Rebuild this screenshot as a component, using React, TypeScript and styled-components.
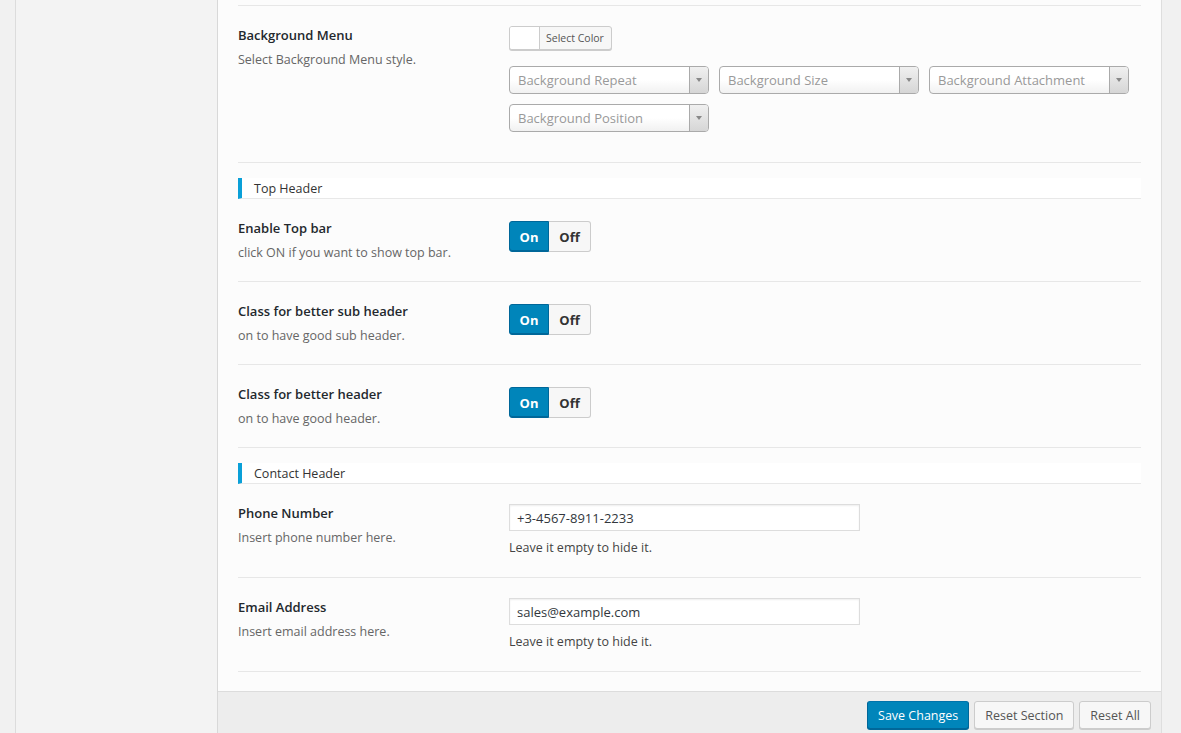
import React from 'react';
import styled, { createGlobalStyle } from 'styled-components';

const GlobalStyle = createGlobalStyle`
    html, body {
        margin: 0;
        padding: 0;
        background: #f1f1f1;
        font-family: "Open Sans", "Noto Sans", sans-serif;
        font-size: 13px;
        color: #444;
        height: 733px;
        overflow: hidden;
    }
    * {
        box-sizing: border-box;
    }
`;

const Page = styled.div`
    display: flex;
    height: 733px;
    padding-left: 15px;
`;

const Sidebar = styled.div`
    width: 203px;
    flex-shrink: 0;
    background: #f3f3f3;
    border-left: 1px solid #dcdcdc;
    border-right: 1px solid #d8d8d8;
`;

const Main = styled.div`
    width: 944px;
    flex-shrink: 0;
    display: flex;
    flex-direction: column;
    background: #fcfcfc;
    border-right: 1px solid #dedede;
`;

const Content = styled.div`
    flex: 1;
    padding: 5px 20px 19px 20px;
`;

const FieldList = styled.div`
    border-top: 1px solid #e7e7e7;
`;

const Field = styled.div<{ $pb?: number }>`
    display: flex;
    padding: 20px 0 ${(p) => p.$pb ?? 19}px 0;
    border-bottom: 1px solid #e7e7e7;
`;

const Label = styled.div`
    width: 271px;
    flex-shrink: 0;
`;

const Title = styled.div`
    font-weight: 600;
    font-size: 13px;
    line-height: 18px;
    color: #23282d;
`;

const Desc = styled.div`
    margin-top: 7px;
    font-size: 12.5px;
    line-height: 18px;
    color: #666;
`;

const Control = styled.div`
    flex: 1;
`;

const SectionHead = styled.div`
    margin-top: 15px;
    height: 21px;
    display: flex;
    align-items: center;
    background: #fff;
    border-left: 4px solid #0aa0d8;
    border-bottom: 1px solid #e8e8e8;
    padding-left: 12px;
    font-size: 12.5px;
    color: #333;
`;

const ColorButton = styled.div`
    display: flex;
    width: fit-content;
    height: 24px;
    border: 1px solid #ccc;
    border-radius: 3px;
    background: #f7f7f7;
    box-shadow: 0 1px 0 #ccc;
    overflow: hidden;
`;

const Swatch = styled.span`
    width: 30px;
    background: #fff;
    border-right: 1px solid #ccc;
`;

const ColorText = styled.span`
    display: flex;
    align-items: center;
    padding: 0 7px 0 6px;
    font-size: 10.5px;
    color: #555;
`;

const SelectGrid = styled.div`
    display: grid;
    grid-template-columns: repeat(3, 200px);
    column-gap: 10px;
    row-gap: 10px;
    margin-top: 16px;
`;

const Select = styled.div`
    height: 28px;
    display: flex;
    border: 1px solid #aaa;
    border-radius: 4px;
    background: linear-gradient(#fff 50%, #f1f1f1);
    overflow: hidden;
`;

const SelectText = styled.span`
    flex: 1;
    display: flex;
    align-items: center;
    padding-left: 8px;
    font-size: 13px;
    color: #999;
    white-space: nowrap;
`;

const SelectArrow = styled.span`
    width: 19px;
    display: flex;
    align-items: center;
    justify-content: center;
    border-left: 1px solid #aaa;
    background: linear-gradient(#f0f0f0, #d6d6d6);
    &::after {
        content: '';
        border-left: 3px solid transparent;
        border-right: 3px solid transparent;
        border-top: 4px solid #888;
    }
`;

const Toggle = styled.div`
    display: flex;
    width: fit-content;
    margin-top: 2px;
    height: 31px;
`;

const ToggleOption = styled.span<{ $active?: boolean }>`
    display: flex;
    align-items: center;
    justify-content: center;
    width: ${(p) => (p.$active ? 40 : 42)}px;
    font-weight: 700;
    font-size: 13px;
    color: ${(p) => (p.$active ? '#fff' : '#333')};
    background: ${(p) => (p.$active ? '#0085ba' : '#f7f7f7')};
    border: 1px solid ${(p) => (p.$active ? '#006799' : '#ccc')};
    border-radius: ${(p) => (p.$active ? '3px 0 0 3px' : '0 3px 3px 0')};
    ${(p) => (p.$active ? '' : 'border-left: none;')}
    box-shadow: ${(p) => (p.$active ? 'inset 0 -1px 0 #006799' : 'none')};
`;

const TextInput = styled.input`
    display: block;
    width: 351px;
    height: 27px;
    padding: 0 7px;
    border: 1px solid #ddd;
    background: #fff;
    box-shadow: inset 0 1px 2px rgba(0, 0, 0, 0.07);
    font-family: inherit;
    font-size: 13px;
    color: #32373c;
    outline: none;
`;

const Help = styled.div`
    margin-top: 8px;
    font-size: 12.5px;
    line-height: 18px;
    color: #444;
`;

const Footer = styled.div`
    height: 42px;
    display: flex;
    justify-content: flex-end;
    align-items: flex-start;
    gap: 5px;
    padding: 9px 10px 0 0;
    background: #ededed;
    border-top: 1px solid #dcdcdc;
`;

const Button = styled.button<{ $primary?: boolean }>`
    height: 28px;
    padding: 0 10px;
    border-radius: 3px;
    border-width: 1px;
    border-style: solid;
    border-color: ${(p) => (p.$primary ? '#0073aa #006799 #006799' : '#ccc')};
    font-family: inherit;
    font-size: 12.5px;
    cursor: pointer;
    color: ${(p) => (p.$primary ? '#fff' : '#555')};
    background: ${(p) => (p.$primary ? '#0085ba' : '#f7f7f7')};
    box-shadow: 0 1px 0 ${(p) => (p.$primary ? '#006799' : '#ccc')};
`;

const toggles = [
    { title: 'Enable Top bar', desc: 'click ON if you want to show top bar.' },
    { title: 'Class for better sub header', desc: 'on to have good sub header.' },
    { title: 'Class for better header', desc: 'on to have good header.' },
];

const contacts = [
    { title: 'Phone Number', desc: 'Insert phone number here.', value: '+3-4567-8911-2233' },
    { title: 'Email Address', desc: 'Insert email address here.', value: 'sales@example.com' },
];

const selects = ['Background Repeat', 'Background Size', 'Background Attachment', 'Background Position'];

const App = () => {
    return (
        <>
            <GlobalStyle />
            <Page>
                <Sidebar />
                <Main>
                    <Content>
                        <FieldList>
                            <Field $pb={30}>
                                <Label>
                                    <Title>Background Menu</Title>
                                    <Desc>Select Background Menu style.</Desc>
                                </Label>
                                <Control>
                                    <ColorButton>
                                        <Swatch />
                                        <ColorText>Select Color</ColorText>
                                    </ColorButton>
                                    <SelectGrid>
                                        {selects.map((s) => (
                                            <Select key={s}>
                                                <SelectText>{s}</SelectText>
                                                <SelectArrow />
                                            </Select>
                                        ))}
                                    </SelectGrid>
                                </Control>
                            </Field>
                        </FieldList>

                        <SectionHead>Top Header</SectionHead>
                        {toggles.map((t) => (
                            <Field key={t.title}>
                                <Label>
                                    <Title>{t.title}</Title>
                                    <Desc>{t.desc}</Desc>
                                </Label>
                                <Control>
                                    <Toggle>
                                        <ToggleOption $active>On</ToggleOption>
                                        <ToggleOption>Off</ToggleOption>
                                    </Toggle>
                                </Control>
                            </Field>
                        ))}

                        <SectionHead>Contact Header</SectionHead>
                        {contacts.map((c) => (
                            <Field key={c.title} $pb={20}>
                                <Label>
                                    <Title>{c.title}</Title>
                                    <Desc>{c.desc}</Desc>
                                </Label>
                                <Control>
                                    <TextInput defaultValue={c.value} />
                                    <Help>Leave it empty to hide it.</Help>
                                </Control>
                            </Field>
                        ))}
                    </Content>
                    <Footer>
                        <Button $primary>Save Changes</Button>
                        <Button>Reset Section</Button>
                        <Button>Reset All</Button>
                    </Footer>
                </Main>
            </Page>
        </>
    );
};

export default App;
